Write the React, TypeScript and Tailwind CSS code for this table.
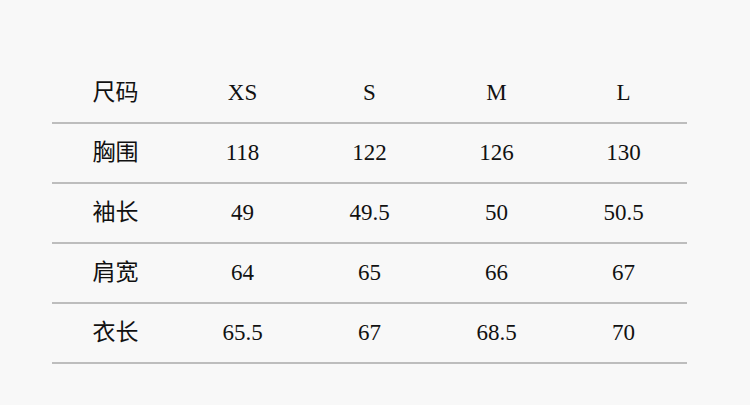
const header = ["尺码", "XS", "S", "M", "L"];

const rows: string[][] = [
  ["胸围", "118", "122", "126", "130"],
  ["袖长", "49", "49.5", "50", "50.5"],
  ["肩宽", "64", "65", "66", "67"],
  ["衣长", "65.5", "67", "68.5", "70"],
];

const Row = ({ cells }: { cells: string[] }) => (
  <div className="grid h-[60px] grid-cols-5 items-center border-b-2 border-[#bdbdbd]">
    {cells.map((c, i) => (
      <div key={i} className="pb-[2px] text-center">
        {c}
      </div>
    ))}
  </div>
);

export default function App() {
  return (
    <div
      className="h-[405px] w-[750px] bg-[#f8f8f8] pt-[64px] text-[23px] leading-none text-[#111]"
      style={{ fontFamily: '"Liberation Serif", "Noto Sans CJK SC", serif' }}
    >
      <div className="ml-[52px] w-[635px]">
        <Row cells={header} />
        {rows.map((r) => (
          <Row key={r[0]} cells={r} />
        ))}
      </div>
    </div>
  );
}
